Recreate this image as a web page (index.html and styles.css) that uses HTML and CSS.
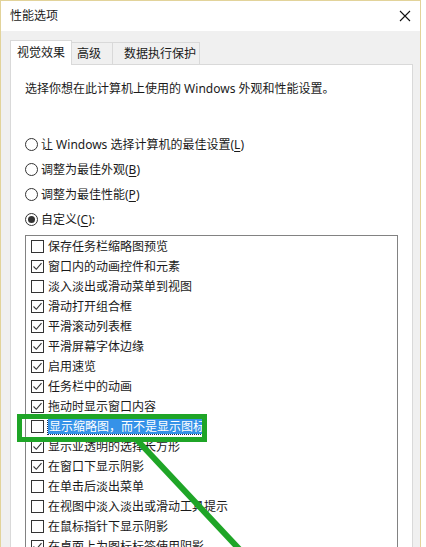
FILE: index.html
```html
<!DOCTYPE html>
<html lang="zh-CN">
<head>
    <meta charset="UTF-8">
    <title>性能选项</title>
    <link rel="stylesheet" href="styles.css">
</head>
<body>
    <div class="window">
        <div class="titlebar">
            <span class="title">性能选项</span>
            <svg class="close" width="12" height="12" viewBox="0 0 12 12">
                <path d="M1 1 L11 11 M11 1 L1 11" stroke="#111" stroke-width="1.1" fill="none"/>
            </svg>
        </div>
        <div class="tabs">
            <div class="tab active">视觉效果</div>
            <div class="tab tab-adv">高级</div>
            <div class="tab tab-dep">数据执行保护</div>
        </div>
        <div class="panel">
            <p class="desc">选择你想在此计算机上使用的 Windows 外观和性能设置。</p>
            <div class="radios">
                <div class="radio"><span class="dot"></span>让 Windows 选择计算机的最佳设置(<u>L</u>)</div>
                <div class="radio"><span class="dot"></span>调整为最佳外观(<u>B</u>)</div>
                <div class="radio"><span class="dot"></span>调整为最佳性能(<u>P</u>)</div>
                <div class="radio on"><span class="dot"></span>自定义(<u>C</u>):</div>
            </div>
            <div class="listbox">
                <div class="item"><span class="box"></span>保存任务栏缩略图预览</div>
                <div class="item"><span class="box"><svg viewBox="0 0 11 11"><path d="M1.5 5.5 L4.3 8.3 L9.5 2.2"/></svg></span>窗口内的动画控件和元素</div>
                <div class="item"><span class="box"></span>淡入淡出或滑动菜单到视图</div>
                <div class="item"><span class="box"><svg viewBox="0 0 11 11"><path d="M1.5 5.5 L4.3 8.3 L9.5 2.2"/></svg></span>滑动打开组合框</div>
                <div class="item"><span class="box"><svg viewBox="0 0 11 11"><path d="M1.5 5.5 L4.3 8.3 L9.5 2.2"/></svg></span>平滑滚动列表框</div>
                <div class="item"><span class="box"><svg viewBox="0 0 11 11"><path d="M1.5 5.5 L4.3 8.3 L9.5 2.2"/></svg></span>平滑屏幕字体边缘</div>
                <div class="item"><span class="box"><svg viewBox="0 0 11 11"><path d="M1.5 5.5 L4.3 8.3 L9.5 2.2"/></svg></span>启用速览</div>
                <div class="item"><span class="box"><svg viewBox="0 0 11 11"><path d="M1.5 5.5 L4.3 8.3 L9.5 2.2"/></svg></span>任务栏中的动画</div>
                <div class="item"><span class="box"><svg viewBox="0 0 11 11"><path d="M1.5 5.5 L4.3 8.3 L9.5 2.2"/></svg></span>拖动时显示窗口内容</div>
                <div class="item selected"><span class="box"></span><span class="label">显示缩略图，而不是显示图标</span></div>
                <div class="item"><span class="box"><svg viewBox="0 0 11 11"><path d="M1.5 5.5 L4.3 8.3 L9.5 2.2"/></svg></span>显示亚透明的选择长方形</div>
                <div class="item"><span class="box"><svg viewBox="0 0 11 11"><path d="M1.5 5.5 L4.3 8.3 L9.5 2.2"/></svg></span>在窗口下显示阴影</div>
                <div class="item"><span class="box"></span>在单击后淡出菜单</div>
                <div class="item"><span class="box"></span>在视图中淡入淡出或滑动工具提示</div>
                <div class="item"><span class="box"></span>在鼠标指针下显示阴影</div>
                <div class="item"><span class="box"><svg viewBox="0 0 11 11"><path d="M1.5 5.5 L4.3 8.3 L9.5 2.2"/></svg></span>在桌面上为图标标签使用阴影</div>
            </div>
        </div>
    </div>

    <div class="mark-box"></div>
    <svg class="mark-line" width="426" height="547" viewBox="0 0 426 547">
        <line x1="137" y1="440" x2="241" y2="551" stroke="#1fa527" stroke-width="6"/>
    </svg>
</body>
</html>
```

FILE: styles.css
```css
html, body {
    margin: 0;
    height: 547px;
    overflow: hidden;
}
body {
    position: relative;
    background-color: #ffffff;
    font-family: "Noto Sans", "Noto Sans CJK SC", sans-serif;
    font-size: 12px;
    color: #1a1a1a;
}
.window {
    width: 419px;
    height: 546px;
    border: 1px solid #e2d39a;
    border-bottom: none;
    background-color: #f0f0f0;
    overflow: hidden;
}
.titlebar {
    height: 30px;
    background-color: #ffffff;
    display: flex;
    align-items: center;
    justify-content: space-between;
    padding: 0 9px 0 9px;
}
.title {
    line-height: 16px;
}
.close {
    display: block;
    margin-top: -1px;
}
.tabs {
    display: flex;
    align-items: flex-end;
    padding: 9px 0 0 9px;
    height: 24px;
    position: relative;
    z-index: 1;
}
.tab {
    box-sizing: border-box;
    height: 22px;
    line-height: 21px;
    background-color: #f0f0f0;
    border: 1px solid #d9d9d9;
    border-bottom: none;
}
.tab.active {
    height: 25px;
    width: 62px;
    padding-left: 6px;
    background-color: #ffffff;
    line-height: 24px;
    margin-bottom: -1px;
}
.tab-adv {
    width: 41px;
    padding-left: 5px;
    border-left: none;
}
.tab-dep {
    width: 87px;
    padding-left: 11px;
    border-left: none;
}
.panel {
    margin: 0 7px 0 9px;
    background-color: #ffffff;
    border: 1px solid #d9d9d9;
    border-bottom: none;
    padding: 0 14px;
    height: 520px;
}
.desc {
    margin: 14px 0 0;
    line-height: 20px;
}
.radios {
    margin-top: 33px;
}
.radio {
    display: flex;
    align-items: center;
    height: 25px;
    line-height: 25px;
}
.radio u {
    text-decoration-thickness: 1px;
    text-underline-offset: 2px;
}
.dot {
    box-sizing: border-box;
    width: 13px;
    height: 13px;
    border: 1px solid #333;
    border-radius: 50%;
    margin-right: 3px;
    display: flex;
    align-items: center;
    justify-content: center;
}
.radio.on .dot::after {
    content: "";
    width: 7px;
    height: 7px;
    border-radius: 50%;
    background-color: #333;
}
.listbox {
    margin-top: 3px;
    border: 1px solid #828282;
    height: 400px;
}
.item {
    display: flex;
    align-items: center;
    height: 20px;
    padding-left: 5px;
}
.box {
    box-sizing: border-box;
    width: 13px;
    height: 13px;
    border: 1px solid #333;
    background-color: #fff;
    margin-right: 4px;
    flex-shrink: 0;
}
.box svg {
    display: block;
    width: 11px;
    height: 11px;
    fill: none;
    stroke: #333;
    stroke-width: 1.1;
}
.selected .label {
    background-color: #3592e8;
    color: #ffffff;
    line-height: 15px;
    padding: 0 1px;
    outline: 1px dotted #1a2a4a;
}
.mark-box {
    position: absolute;
    left: 17px;
    top: 414px;
    width: 190px;
    height: 28px;
    box-sizing: border-box;
    border: 5px solid #1fa527;
}
.mark-line {
    position: absolute;
    left: 0;
    top: 0;
}
```
